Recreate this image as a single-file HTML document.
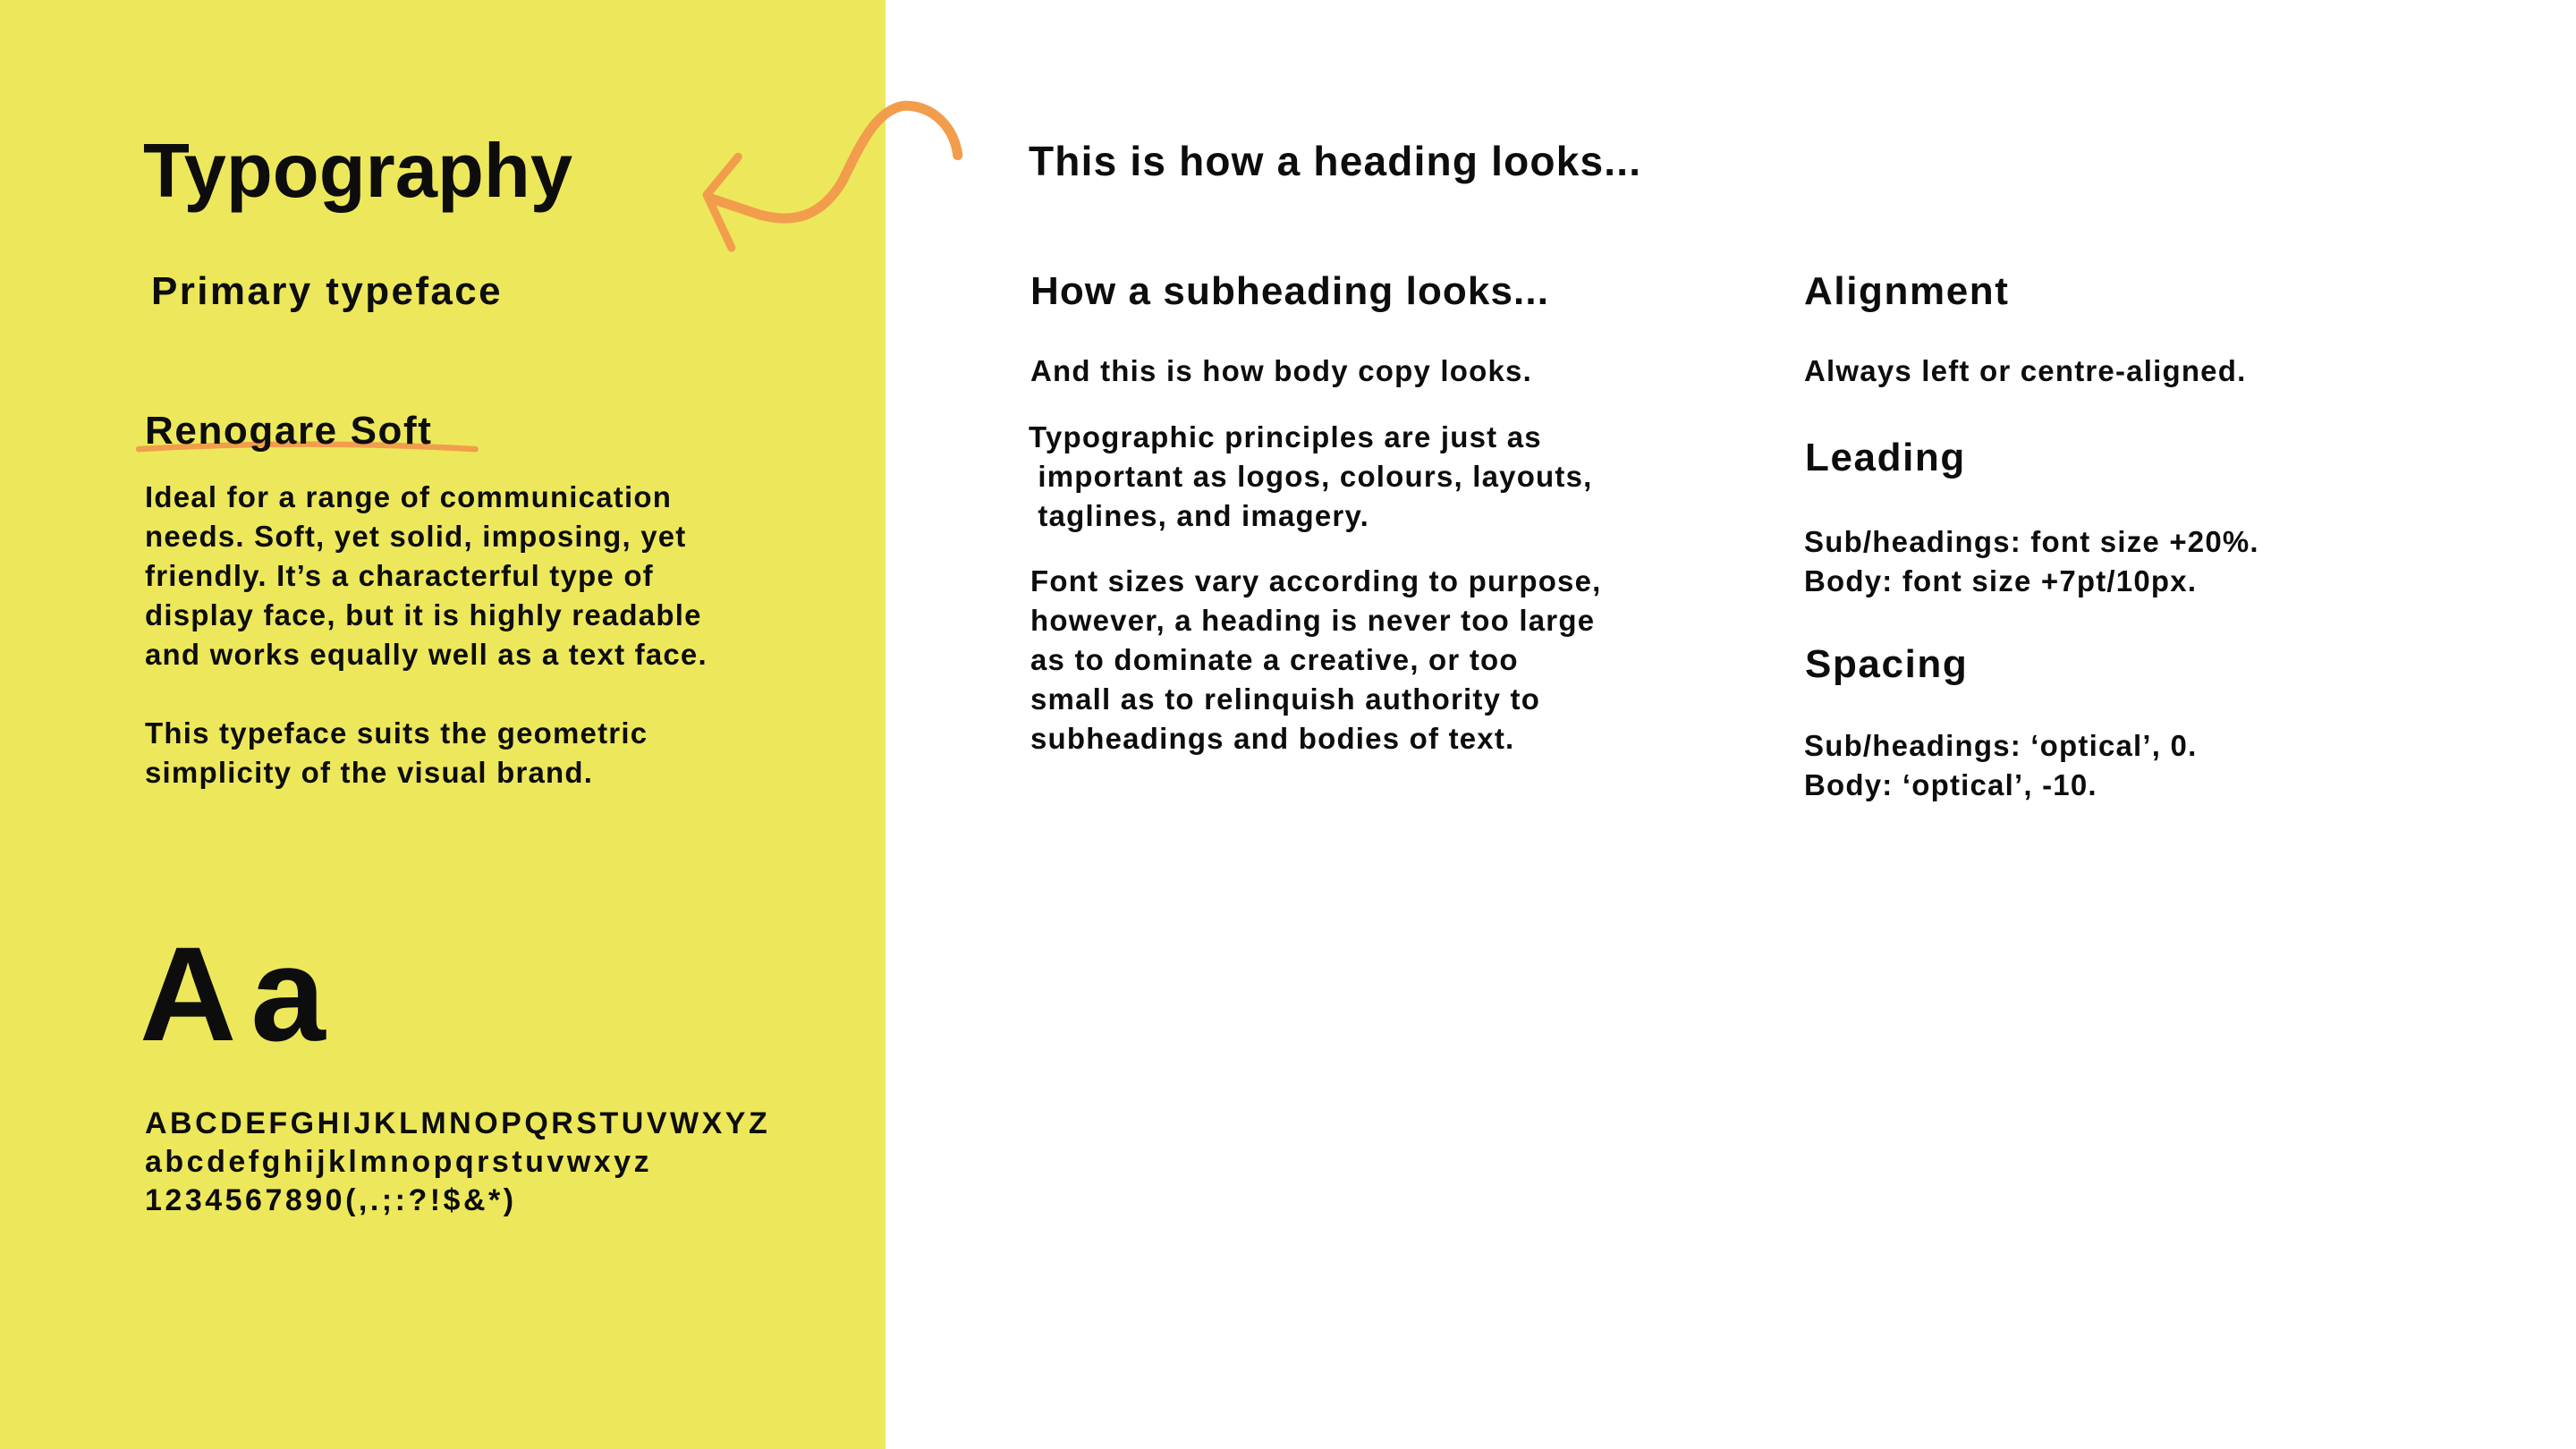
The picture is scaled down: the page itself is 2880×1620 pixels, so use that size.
<!DOCTYPE html>
<html><head><meta charset="utf-8"><style>
html,body{margin:0;padding:0}
body{width:2880px;height:1620px;position:relative;background:#fff;overflow:hidden;font-family:"Liberation Sans",sans-serif;font-weight:bold;color:#0d0d0d}
.y{position:absolute;left:0;top:0;width:990px;height:1620px;background:#EDE85B}
.t{position:absolute;white-space:nowrap}
.b{font-size:33px;line-height:44px;letter-spacing:1.2px}
.h{font-size:44px;line-height:50px;letter-spacing:1.6px}
</style></head><body>
<div class="y"></div>
<svg style="position:absolute;left:0;top:0" width="2880" height="1620" viewBox="0 0 1560 877.5">
<g fill="none" stroke="#F29D4C" stroke-linecap="round" stroke-linejoin="round">
<path d="M580,94 C578,78 566,64 548,64 C530,66 520,90 510,110 C498,130 482,136 460,130 L430,120" stroke-width="6"/>
<path d="M447,95 L428,118 L443,150" stroke-width="5"/>
<path d="M84,272 Q185,266 288,272" stroke-width="3.5"/>
</g>
</svg>
<div class="t" style="left:160px;top:142px;font-size:85px;line-height:100px">Typography</div>
<div class="t h" style="left:169px;top:301px;letter-spacing:2.4px">Primary typeface</div>
<div class="t h" style="left:162px;top:457px">Renogare Soft</div>
<div class="t b" style="left:162px;top:534px">Ideal for a range of communication<br>needs. Soft, yet solid, imposing, yet<br>friendly. It’s a characterful type of<br>display face, but it is highly readable<br>and works equally well as a text face.<br><br>This typeface suits the geometric<br>simplicity of the visual brand.</div>
<div class="t" style="left:156px;top:1031px;font-size:150px;line-height:160px;letter-spacing:16px">Aa</div>
<div class="t" style="left:162px;top:1235px;font-size:34px;line-height:43px;letter-spacing:3.5px">ABCDEFGHIJKLMNOPQRSTUVWXYZ<br>abcdefghijklmnopqrstuvwxyz<br>1234567890(,.;:?!$&amp;*)</div>
<div class="t" style="left:1150px;top:155px;font-size:46px;line-height:50px;letter-spacing:1.2px">This is how a heading looks...</div>
<div class="t h" style="left:1152px;top:301px;letter-spacing:1.1px">How a subheading looks...</div>
<div class="t b" style="left:1152px;top:393px">And this is how body copy looks.</div>
<div class="t b" style="left:1150px;top:467px">Typographic principles are just as<br>&nbsp;important as logos, colours, layouts,<br>&nbsp;taglines, and imagery.</div>
<div class="t b" style="left:1152px;top:628px">Font sizes vary according to purpose,<br>however, a heading is never too large<br>as to dominate a creative, or too<br>small as to relinquish authority to<br>subheadings and bodies of text.</div>
<div class="t h" style="left:2017px;top:301px">Alignment</div>
<div class="t b" style="left:2017px;top:393px">Always left or centre-aligned.</div>
<div class="t h" style="left:2018px;top:487px">Leading</div>
<div class="t b" style="left:2017px;top:584px">Sub/headings: font size +20%.<br>Body: font size +7pt/10px.</div>
<div class="t h" style="left:2018px;top:718px">Spacing</div>
<div class="t b" style="left:2017px;top:812px">Sub/headings: ‘optical’, 0.<br>Body: ‘optical’, -10.</div>
</body></html>
